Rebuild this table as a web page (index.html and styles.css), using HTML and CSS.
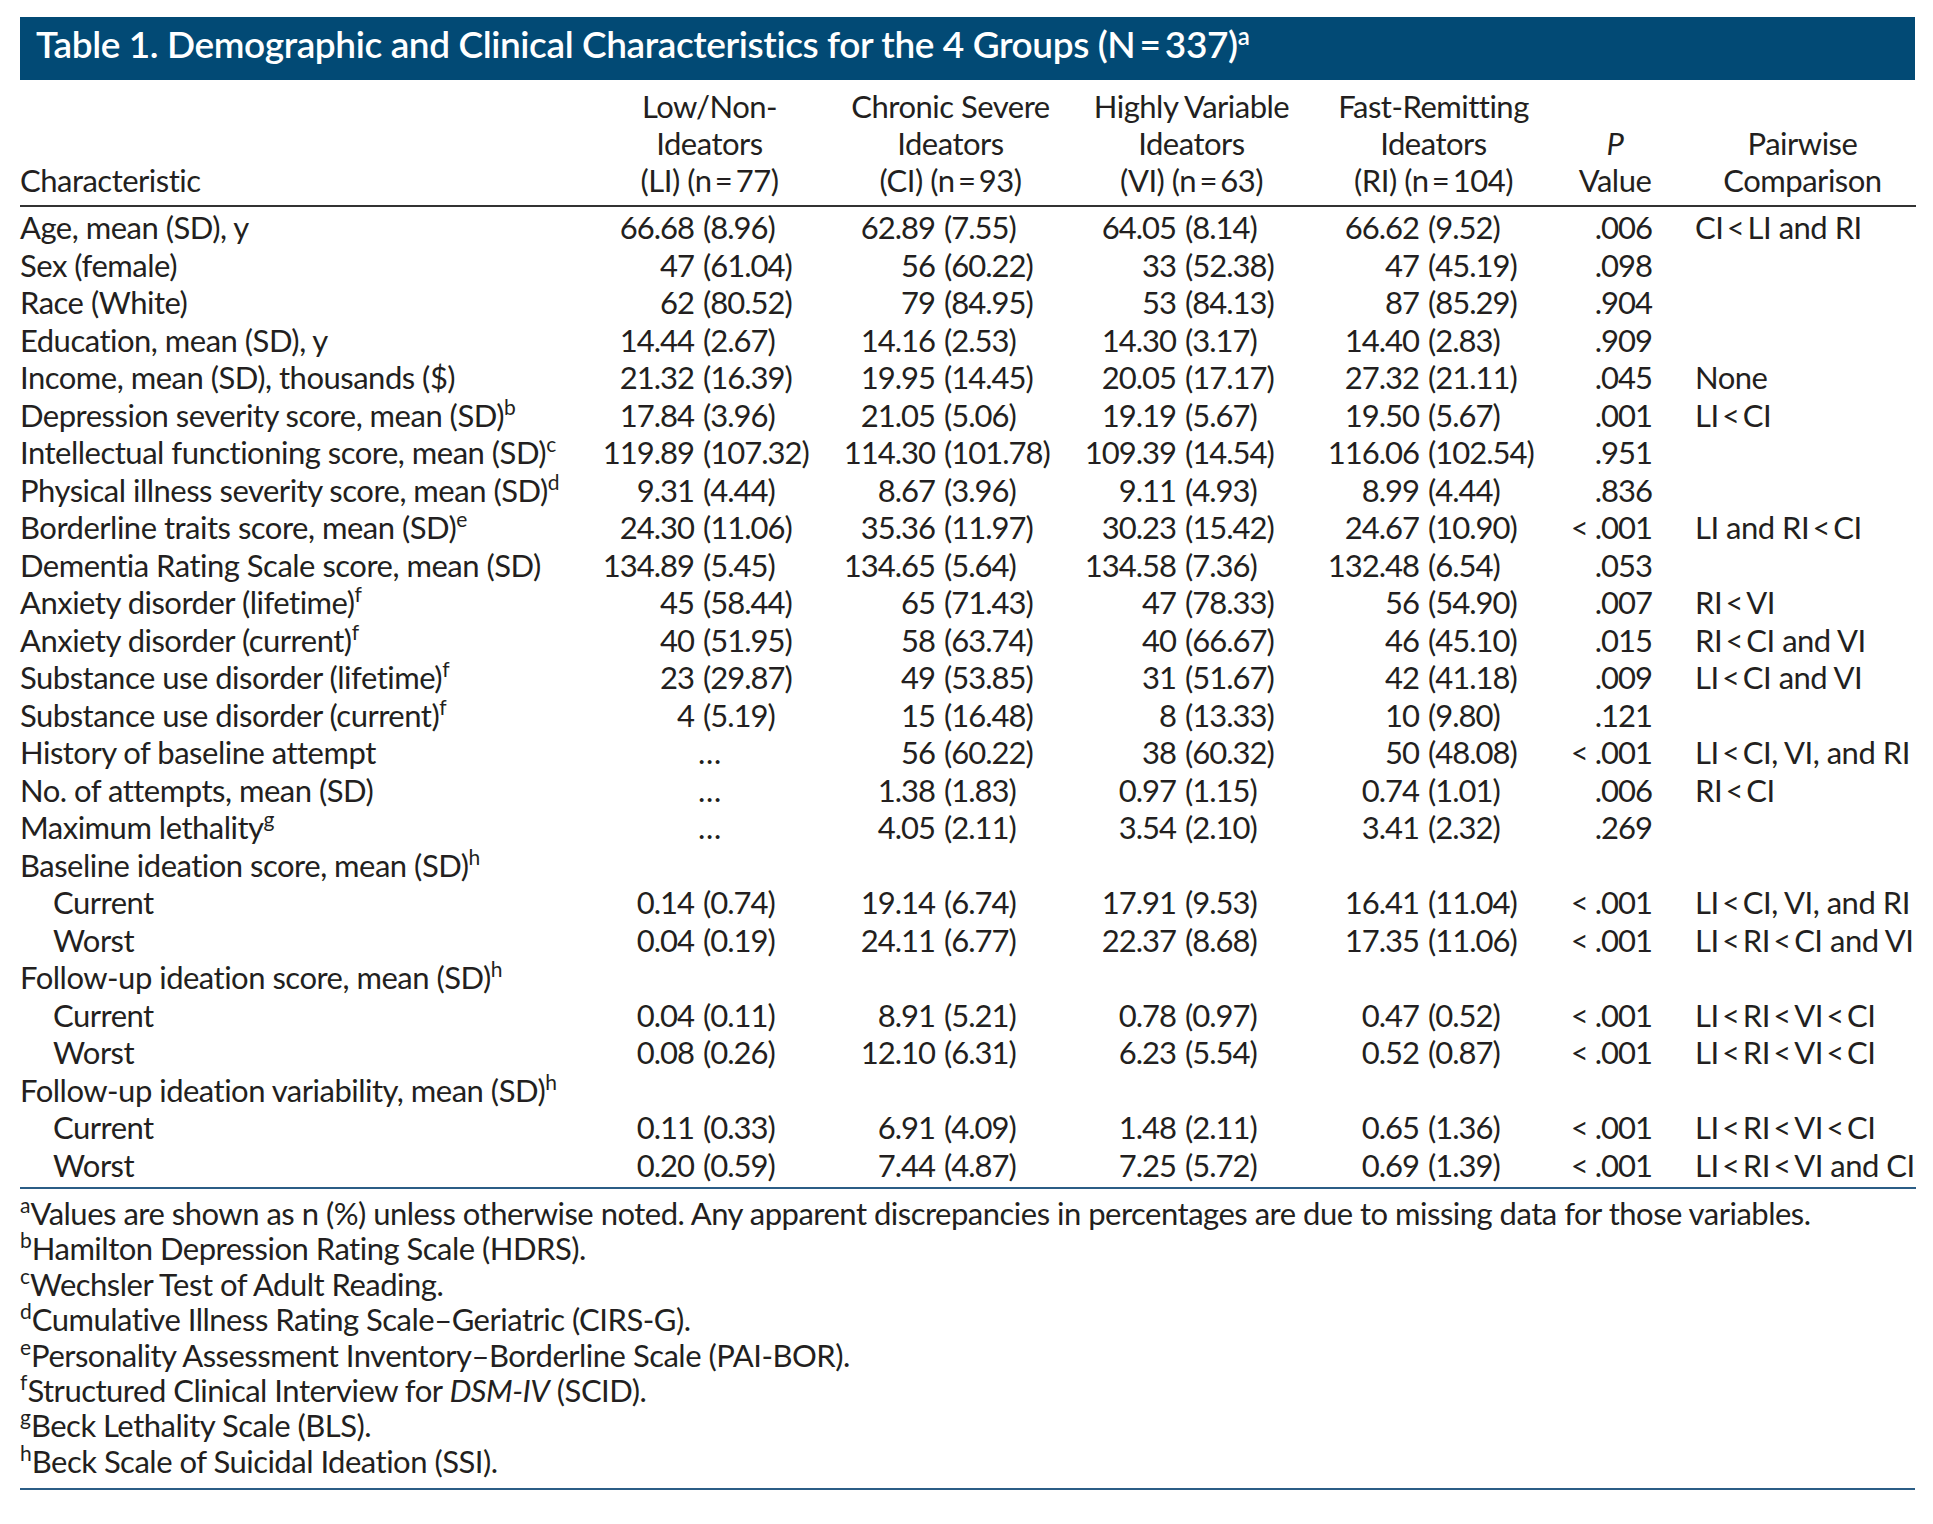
FILE: index.html
```html
<!DOCTYPE html>
<html lang="en">
<head>
<meta charset="utf-8">
<title>Table 1</title>
<link rel="stylesheet" href="styles.css">
</head>
<body>
<div class="page">
  <div class="title">Table 1. Demographic and Clinical Characteristics for the 4 Groups (N&thinsp;=&thinsp;337)<span class="tsup">a</span></div>
  <table class="tbl">
    <colgroup>
      <col class="c1"><col class="cg"><col class="cg"><col class="cg"><col class="cr"><col class="cp"><col class="cw">
    </colgroup>
    <thead>
      <tr>
        <th class="hl">Characteristic</th>
        <th>Low/Non-<br>Ideators<br>(LI) (n&thinsp;=&thinsp;77)</th>
        <th>Chronic Severe<br>Ideators<br>(CI) (n&thinsp;=&thinsp;93)</th>
        <th>Highly Variable<br>Ideators<br>(VI) (n&thinsp;=&thinsp;63)</th>
        <th>Fast-Remitting<br>Ideators<br>(RI) (n&thinsp;=&thinsp;104)</th>
        <th><i>P</i><br>Value</th>
        <th class="hw">Pairwise<br>Comparison</th>
      </tr>
    </thead>
    <tbody>
      <tr><td>Age, mean (SD), y</td><td class="v"><span class="n">66.68</span>(8.96)</td><td class="v"><span class="n">62.89</span>(7.55)</td><td class="v"><span class="n">64.05</span>(8.14)</td><td class="v r"><span class="n">66.62</span>(9.52)</td><td class="p">.006</td><td class="w">CI&thinsp;&lt;&thinsp;LI and RI</td></tr>
      <tr><td>Sex (female)</td><td class="v"><span class="n">47</span>(61.04)</td><td class="v"><span class="n">56</span>(60.22)</td><td class="v"><span class="n">33</span>(52.38)</td><td class="v r"><span class="n">47</span>(45.19)</td><td class="p">.098</td><td class="w"></td></tr>
      <tr><td>Race (White)</td><td class="v"><span class="n">62</span>(80.52)</td><td class="v"><span class="n">79</span>(84.95)</td><td class="v"><span class="n">53</span>(84.13)</td><td class="v r"><span class="n">87</span>(85.29)</td><td class="p">.904</td><td class="w"></td></tr>
      <tr><td>Education, mean (SD), y</td><td class="v"><span class="n">14.44</span>(2.67)</td><td class="v"><span class="n">14.16</span>(2.53)</td><td class="v"><span class="n">14.30</span>(3.17)</td><td class="v r"><span class="n">14.40</span>(2.83)</td><td class="p">.909</td><td class="w"></td></tr>
      <tr><td>Income, mean (SD), thousands ($)</td><td class="v"><span class="n">21.32</span>(16.39)</td><td class="v"><span class="n">19.95</span>(14.45)</td><td class="v"><span class="n">20.05</span>(17.17)</td><td class="v r"><span class="n">27.32</span>(21.11)</td><td class="p">.045</td><td class="w">None</td></tr>
      <tr><td>Depression severity score, mean (SD)<sup>b</sup></td><td class="v"><span class="n">17.84</span>(3.96)</td><td class="v"><span class="n">21.05</span>(5.06)</td><td class="v"><span class="n">19.19</span>(5.67)</td><td class="v r"><span class="n">19.50</span>(5.67)</td><td class="p">.001</td><td class="w">LI&thinsp;&lt;&thinsp;CI</td></tr>
      <tr><td>Intellectual functioning score, mean (SD)<sup>c</sup></td><td class="v"><span class="n">119.89</span>(107.32)</td><td class="v"><span class="n">114.30</span>(101.78)</td><td class="v"><span class="n">109.39</span>(14.54)</td><td class="v r"><span class="n">116.06</span>(102.54)</td><td class="p">.951</td><td class="w"></td></tr>
      <tr><td>Physical illness severity score, mean (SD)<sup>d</sup></td><td class="v"><span class="n">9.31</span>(4.44)</td><td class="v"><span class="n">8.67</span>(3.96)</td><td class="v"><span class="n">9.11</span>(4.93)</td><td class="v r"><span class="n">8.99</span>(4.44)</td><td class="p">.836</td><td class="w"></td></tr>
      <tr><td>Borderline traits score, mean (SD)<sup>e</sup></td><td class="v"><span class="n">24.30</span>(11.06)</td><td class="v"><span class="n">35.36</span>(11.97)</td><td class="v"><span class="n">30.23</span>(15.42)</td><td class="v r"><span class="n">24.67</span>(10.90)</td><td class="p">&lt; .001</td><td class="w">LI and RI&thinsp;&lt;&thinsp;CI</td></tr>
      <tr><td>Dementia Rating Scale score, mean (SD)</td><td class="v"><span class="n">134.89</span>(5.45)</td><td class="v"><span class="n">134.65</span>(5.64)</td><td class="v"><span class="n">134.58</span>(7.36)</td><td class="v r"><span class="n">132.48</span>(6.54)</td><td class="p">.053</td><td class="w"></td></tr>
      <tr><td>Anxiety disorder (lifetime)<sup>f</sup></td><td class="v"><span class="n">45</span>(58.44)</td><td class="v"><span class="n">65</span>(71.43)</td><td class="v"><span class="n">47</span>(78.33)</td><td class="v r"><span class="n">56</span>(54.90)</td><td class="p">.007</td><td class="w">RI&thinsp;&lt;&thinsp;VI</td></tr>
      <tr><td>Anxiety disorder (current)<sup>f</sup></td><td class="v"><span class="n">40</span>(51.95)</td><td class="v"><span class="n">58</span>(63.74)</td><td class="v"><span class="n">40</span>(66.67)</td><td class="v r"><span class="n">46</span>(45.10)</td><td class="p">.015</td><td class="w">RI&thinsp;&lt;&thinsp;CI and VI</td></tr>
      <tr><td>Substance use disorder (lifetime)<sup>f</sup></td><td class="v"><span class="n">23</span>(29.87)</td><td class="v"><span class="n">49</span>(53.85)</td><td class="v"><span class="n">31</span>(51.67)</td><td class="v r"><span class="n">42</span>(41.18)</td><td class="p">.009</td><td class="w">LI&thinsp;&lt;&thinsp;CI and VI</td></tr>
      <tr><td>Substance use disorder (current)<sup>f</sup></td><td class="v"><span class="n">4</span>(5.19)</td><td class="v"><span class="n">15</span>(16.48)</td><td class="v"><span class="n">8</span>(13.33)</td><td class="v r"><span class="n">10</span>(9.80)</td><td class="p">.121</td><td class="w"></td></tr>
      <tr><td>History of baseline attempt</td><td class="e">&hellip;</td><td class="v"><span class="n">56</span>(60.22)</td><td class="v"><span class="n">38</span>(60.32)</td><td class="v r"><span class="n">50</span>(48.08)</td><td class="p">&lt; .001</td><td class="w">LI&thinsp;&lt;&thinsp;CI, VI, and RI</td></tr>
      <tr><td>No. of attempts, mean (SD)</td><td class="e">&hellip;</td><td class="v"><span class="n">1.38</span>(1.83)</td><td class="v"><span class="n">0.97</span>(1.15)</td><td class="v r"><span class="n">0.74</span>(1.01)</td><td class="p">.006</td><td class="w">RI&thinsp;&lt;&thinsp;CI</td></tr>
      <tr><td>Maximum lethality<sup>g</sup></td><td class="e">&hellip;</td><td class="v"><span class="n">4.05</span>(2.11)</td><td class="v"><span class="n">3.54</span>(2.10)</td><td class="v r"><span class="n">3.41</span>(2.32)</td><td class="p">.269</td><td class="w"></td></tr>
      <tr><td>Baseline ideation score, mean (SD)<sup>h</sup></td><td></td><td></td><td></td><td></td><td></td><td></td></tr>
      <tr><td class="ind">Current</td><td class="v"><span class="n">0.14</span>(0.74)</td><td class="v"><span class="n">19.14</span>(6.74)</td><td class="v"><span class="n">17.91</span>(9.53)</td><td class="v r"><span class="n">16.41</span>(11.04)</td><td class="p">&lt; .001</td><td class="w">LI&thinsp;&lt;&thinsp;CI, VI, and RI</td></tr>
      <tr><td class="ind">Worst</td><td class="v"><span class="n">0.04</span>(0.19)</td><td class="v"><span class="n">24.11</span>(6.77)</td><td class="v"><span class="n">22.37</span>(8.68)</td><td class="v r"><span class="n">17.35</span>(11.06)</td><td class="p">&lt; .001</td><td class="w">LI&thinsp;&lt;&thinsp;RI&thinsp;&lt;&thinsp;CI and VI</td></tr>
      <tr><td>Follow-up ideation score, mean (SD)<sup>h</sup></td><td></td><td></td><td></td><td></td><td></td><td></td></tr>
      <tr><td class="ind">Current</td><td class="v"><span class="n">0.04</span>(0.11)</td><td class="v"><span class="n">8.91</span>(5.21)</td><td class="v"><span class="n">0.78</span>(0.97)</td><td class="v r"><span class="n">0.47</span>(0.52)</td><td class="p">&lt; .001</td><td class="w">LI&thinsp;&lt;&thinsp;RI&thinsp;&lt;&thinsp;VI&thinsp;&lt;&thinsp;CI</td></tr>
      <tr><td class="ind">Worst</td><td class="v"><span class="n">0.08</span>(0.26)</td><td class="v"><span class="n">12.10</span>(6.31)</td><td class="v"><span class="n">6.23</span>(5.54)</td><td class="v r"><span class="n">0.52</span>(0.87)</td><td class="p">&lt; .001</td><td class="w">LI&thinsp;&lt;&thinsp;RI&thinsp;&lt;&thinsp;VI&thinsp;&lt;&thinsp;CI</td></tr>
      <tr><td>Follow-up ideation variability, mean (SD)<sup>h</sup></td><td></td><td></td><td></td><td></td><td></td><td></td></tr>
      <tr><td class="ind">Current</td><td class="v"><span class="n">0.11</span>(0.33)</td><td class="v"><span class="n">6.91</span>(4.09)</td><td class="v"><span class="n">1.48</span>(2.11)</td><td class="v r"><span class="n">0.65</span>(1.36)</td><td class="p">&lt; .001</td><td class="w">LI&thinsp;&lt;&thinsp;RI&thinsp;&lt;&thinsp;VI&thinsp;&lt;&thinsp;CI</td></tr>
      <tr><td class="ind">Worst</td><td class="v"><span class="n">0.20</span>(0.59)</td><td class="v"><span class="n">7.44</span>(4.87)</td><td class="v"><span class="n">7.25</span>(5.72)</td><td class="v r"><span class="n">0.69</span>(1.39)</td><td class="p">&lt; .001</td><td class="w">LI&thinsp;&lt;&thinsp;RI&thinsp;&lt;&thinsp;VI and CI</td></tr>
    </tbody>
  </table>
  <div class="notes">
    <p><sup>a</sup>Values are shown as n (%) unless otherwise noted. Any apparent discrepancies in percentages are due to missing data for those variables.</p>
    <p><sup>b</sup>Hamilton Depression Rating Scale (HDRS).</p>
    <p><sup>c</sup>Wechsler Test of Adult Reading.</p>
    <p><sup>d</sup>Cumulative Illness Rating Scale&ndash;Geriatric (CIRS-G).</p>
    <p><sup>e</sup>Personality Assessment Inventory&ndash;Borderline Scale (PAI-BOR).</p>
    <p><sup>f</sup>Structured Clinical Interview for <i>DSM-IV</i> (SCID).</p>
    <p><sup>g</sup>Beck Lethality Scale (BLS).</p>
    <p><sup>h</sup>Beck Scale of Suicidal Ideation (SSI).</p>
  </div>
</div>
</body>
</html>
```
FILE: styles.css
```css
html, body {
  margin: 0;
  padding: 0;
  background: #ffffff;
}
body {
  font-family: "Lato", "Open Sans", "DejaVu Sans", sans-serif;
  color: #231f20;
}
.page {
  width: 1895px;
  margin-left: 20px;
  padding-top: 17px;
}
.title {
  height: 63px;
  box-sizing: border-box;
  background: #024a75;
  color: #ffffff;
  font-weight: 600;
  font-size: 37px;
  line-height: 53px;
  letter-spacing: -0.4px;
  padding: 0 0 10px 16px;
  white-space: nowrap;
}
.tsup {
  font-size: 24px;
  line-height: 0;
  vertical-align: 13px;
  letter-spacing: 0;
}
.tbl {
  width: 100%;
  border-collapse: collapse;
  table-layout: fixed;
  font-size: 31px;
  letter-spacing: -0.5px;
}
.c1 { width: 569px; }
.cg { width: 241px; }
.cr { width: 243px; }
.cp { width: 120px; }
.cw { width: 241px; }
.tbl thead th {
  font-weight: 400;
  line-height: 37px;
  vertical-align: bottom;
  text-align: center;
  padding: 8px 0 6px;
  border-bottom: 2px solid #333333;
  white-space: nowrap;
}
.tbl thead th.hl { text-align: left; }
.tbl thead th.hw { padding-left: 20px; padding-right: 6px; }
.tbl td {
  line-height: 37.5px;
  height: 37.5px;
  padding: 0;
  white-space: nowrap;
  vertical-align: top;
}
.tbl tbody tr:first-child td { padding-top: 2px; }
.tbl tbody tr:last-child td {
  padding-bottom: 3px;
  border-bottom: 2px solid #2b5d86;
}
.tbl td.ind { padding-left: 33px; }
.tbl td.v {
  letter-spacing: -1px;
  font-variant-numeric: tabular-nums;
}
.tbl td.v.r { padding-left: 2px; }
.tbl td.v .n {
  display: inline-block;
  width: 114px;
  box-sizing: border-box;
  padding-right: 9px;
  text-align: right;
}
.tbl td.e { text-align: center; }
.tbl td.p {
  text-align: right;
  padding-right: 23px;
  letter-spacing: -1px;
  font-variant-numeric: tabular-nums;
}
.tbl td.w { padding-left: 20px; }
sup {
  font-size: 21px;
  line-height: 0;
  vertical-align: 12px;
  letter-spacing: 0;
}
.notes {
  padding: 7px 0 9px;
  border-bottom: 2px solid #2b5d86;
  font-size: 31px;
  line-height: 35.4px;
  letter-spacing: -0.5px;
}
.notes p {
  margin: 0;
  white-space: nowrap;
}
```
